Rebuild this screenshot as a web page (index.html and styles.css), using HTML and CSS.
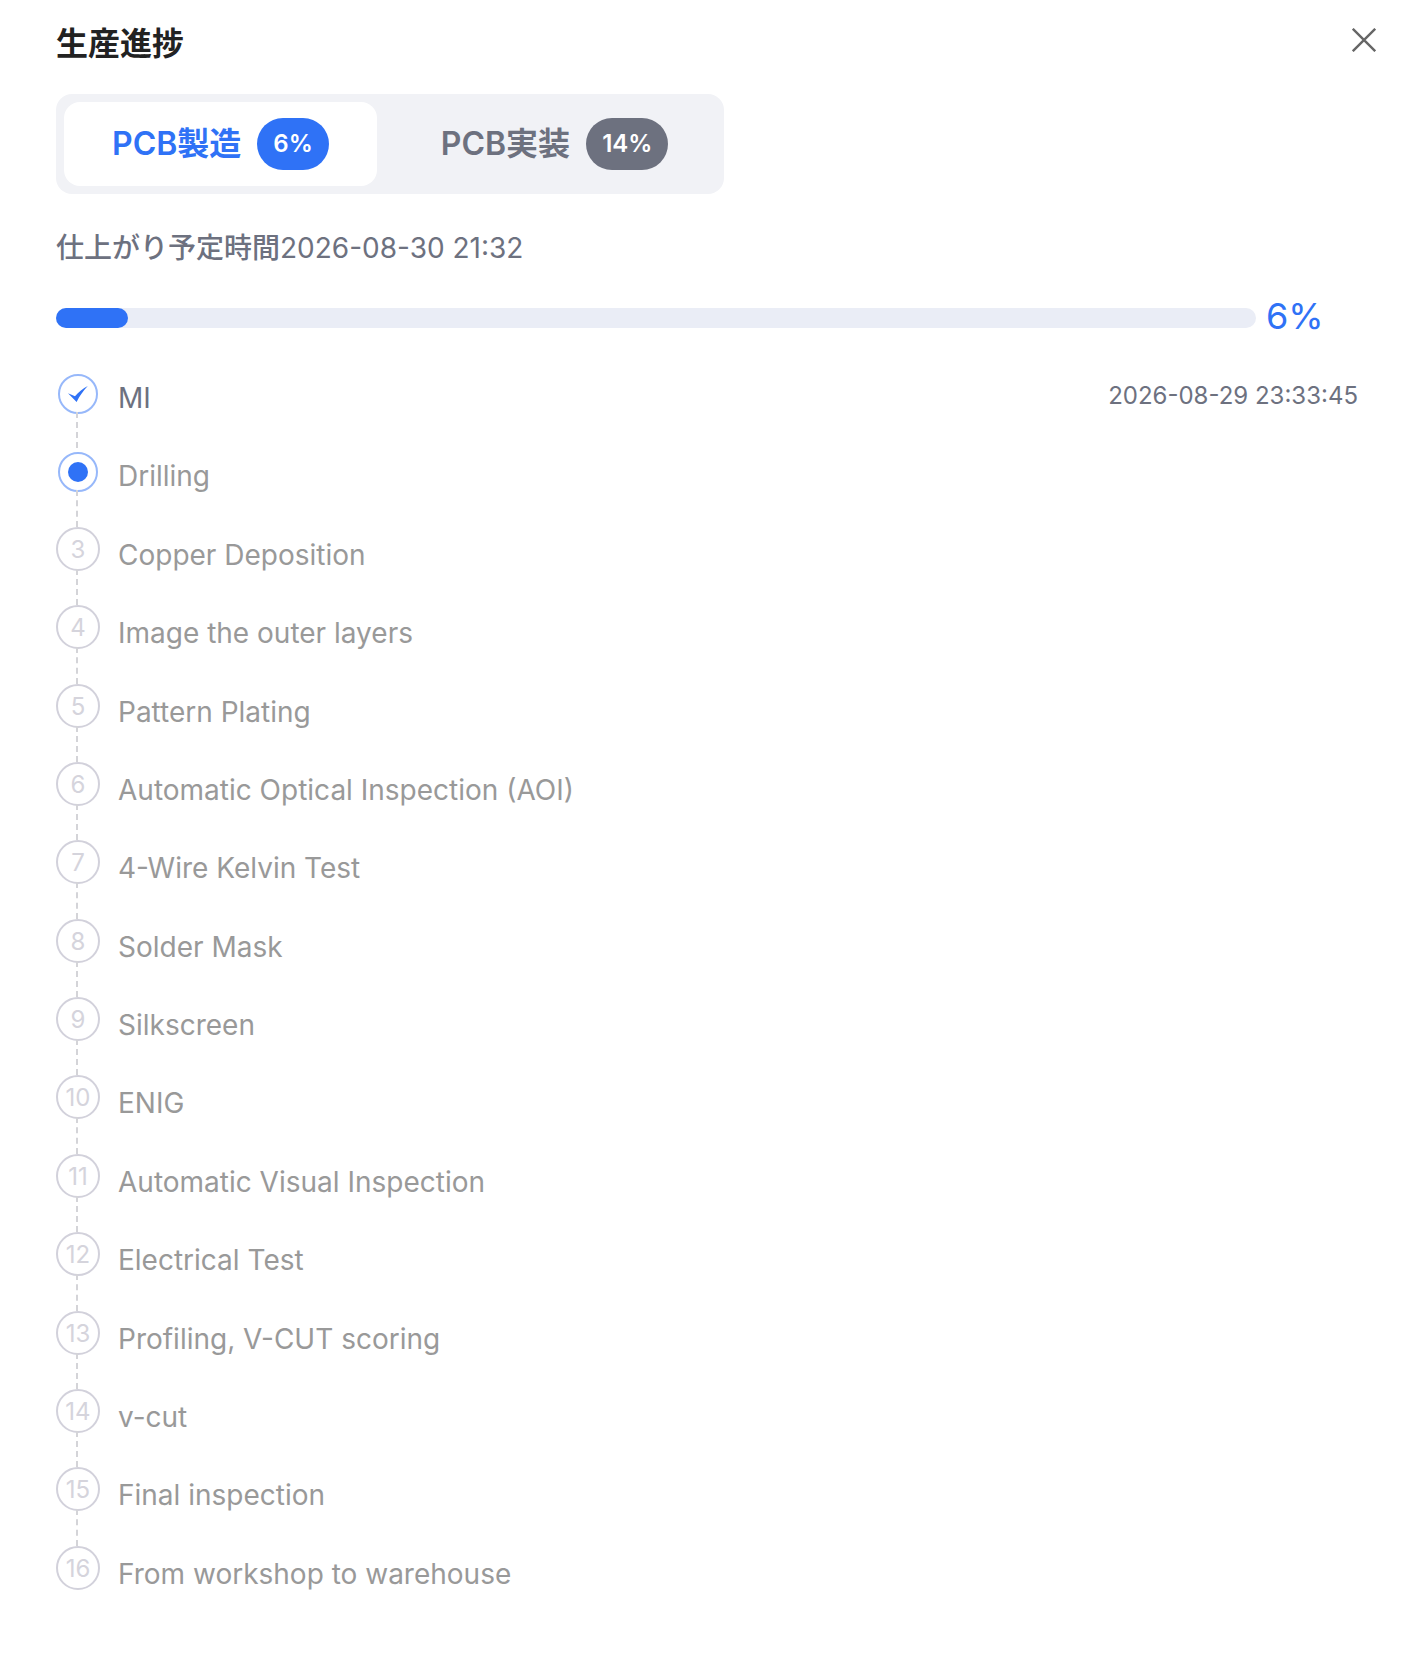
FILE: index.html
```html
<!DOCTYPE html>
<html lang="ja">
<head>
<meta charset="utf-8">
<meta name="viewport" content="width=device-width, initial-scale=1">
<title>生産進捗</title>
<link rel="stylesheet" href="styles.css">
</head>
<body>
<main class="dialog">
  <header class="dialog-header">
    <h1 class="dialog-title">生産進捗</h1>
    <button class="close" type="button" aria-label="閉じる">
      <svg width="24" height="24" viewBox="0 0 24 24" fill="none" stroke="currentColor" stroke-width="2.4" aria-hidden="true"><path d="M.8.8 23.2 23.2M23.2.8.8 23.2"/></svg>
    </button>
  </header>
  <div class="dialog-body">
    <div class="tabs" role="tablist">
      <button class="tab tab-active" type="button" role="tab" aria-selected="true">PCB製造<span class="badge">6%</span></button>
      <button class="tab" type="button" role="tab" aria-selected="false">PCB実装<span class="badge">14%</span></button>
    </div>
    <p class="estimate"><span class="estimate-label">仕上がり予定時間</span><time>2026-08-30 21:32</time></p>
    <div class="progress">
      <div class="progress-track"><div class="progress-fill" style="width: 6%"></div></div>
      <span class="progress-value">6%</span>
    </div>
    <ol class="steps">
      <li class="step step-done">
        <div class="marker"><span class="dot"><svg width="20" height="16" viewBox="0 0 20 16" fill="currentColor" aria-hidden="true"><path d="M0 7.2 7 10.2C10.500 6.200 15 2.500 19.800 0 15.500 4.500 11.500 10 8.600 16Z"/></svg></span></div>
        <span class="label">MI</span><time class="time">2026-08-29 23:33:45</time>
      </li>
      <li class="step step-current"><div class="marker"><span class="dot"></span></div><span class="label">Drilling</span></li>
      <li class="step"><div class="marker"><span class="dot">3</span></div><span class="label">Copper Deposition</span></li>
      <li class="step"><div class="marker"><span class="dot">4</span></div><span class="label">Image the outer layers</span></li>
      <li class="step"><div class="marker"><span class="dot">5</span></div><span class="label">Pattern Plating</span></li>
      <li class="step"><div class="marker"><span class="dot">6</span></div><span class="label">Automatic Optical Inspection (AOI)</span></li>
      <li class="step"><div class="marker"><span class="dot">7</span></div><span class="label">4-Wire Kelvin Test</span></li>
      <li class="step"><div class="marker"><span class="dot">8</span></div><span class="label">Solder Mask</span></li>
      <li class="step"><div class="marker"><span class="dot">9</span></div><span class="label">Silkscreen</span></li>
      <li class="step"><div class="marker"><span class="dot">10</span></div><span class="label">ENIG</span></li>
      <li class="step"><div class="marker"><span class="dot">11</span></div><span class="label">Automatic Visual Inspection</span></li>
      <li class="step"><div class="marker"><span class="dot">12</span></div><span class="label">Electrical Test</span></li>
      <li class="step"><div class="marker"><span class="dot">13</span></div><span class="label">Profiling, V-CUT scoring</span></li>
      <li class="step"><div class="marker"><span class="dot">14</span></div><span class="label">v-cut</span></li>
      <li class="step"><div class="marker"><span class="dot">15</span></div><span class="label">Final inspection</span></li>
      <li class="step"><div class="marker"><span class="dot">16</span></div><span class="label">From workshop to warehouse</span></li>
    </ol>
  </div>
</main>
</body>
</html>
```
FILE: styles.css
```css
*,
*::before,
*::after {
  box-sizing: border-box;
}

body {
  margin: 0;
  background: #fff;
  color: #6d717f;
  font-family: Inter, "Noto Sans CJK JP", sans-serif;
  font-size: 28px;
  line-height: 40px;
}

button {
  border: 0;
  background: none;
  color: inherit;
  font: inherit;
  cursor: pointer;
}

.dialog {
  display: flex;
  flex-direction: column;
  min-height: 100vh;
}

.dialog-header {
  display: flex;
  justify-content: space-between;
  align-items: flex-start;
  padding: 20px 42px 26px 56px;
}

.dialog-title {
  margin: 0;
  color: #222;
  font-size: 32px;
  font-weight: 600;
  line-height: 48px;
}

.close {
  display: flex;
  padding: 8px 0;
  color: #666;
}

.dialog-body {
  display: flex;
  flex: 1;
  flex-direction: column;
  padding: 0 60px 50px 56px;
}

.tabs {
  display: flex;
  gap: 16px;
  align-self: flex-start;
  padding: 8px;
  border-radius: 16px;
  background: #f1f2f6;
}

.tab {
  display: flex;
  align-items: center;
  gap: 16px;
  padding: 16px 48px;
  border-radius: 16px;
  font-size: 32px;
  font-weight: 600;
  white-space: nowrap;
}

.tab-active {
  background: #fff;
  color: #2f72f6;
}

.badge {
  padding: 0 16px;
  border-radius: 26px;
  background: #6d717f;
  color: #fff;
  font-size: 24px;
  font-weight: 600;
  line-height: 52px;
}

.tab-active .badge {
  background: #2f72f6;
}

.estimate {
  margin: 34px 0 28px;
}

.estimate-label {
  font-weight: 500;
}

.progress {
  display: flex;
  align-items: center;
  gap: 10px;
}

.progress-track {
  flex: 1;
  height: 20px;
  margin-top: 4px;
  border-radius: 10px;
  background: #eaedf6;
}

.progress-fill {
  height: 100%;
  border-radius: 10px;
  background: #2f72f6;
}

.progress-value {
  width: 92px;
  color: #2f72f6;
  font-size: 36px;
}

/* Rows share the height that is left in the dialog. */
.steps {
  display: grid;
  flex: 1;
  grid-auto-rows: 1fr;
  margin: 34px 0 0;
  padding: 0;
  list-style: none;
}

.step {
  display: flex;
  gap: 18px;
  min-height: 64px;
  color: #999;
}

.step-done {
  color: #6d717f;
}

.marker {
  display: flex;
  flex-direction: column;
  align-items: center;
  width: 44px;
}

.dot {
  display: flex;
  flex: none;
  align-items: center;
  justify-content: center;
  width: 44px;
  height: 44px;
  padding-top: 2px;
  border: 2px solid #d2d1db;
  border-radius: 50%;
  color: #d5d4dc;
  font-size: 24px;
}

.step-done .dot,
.step-current .dot {
  width: 40px;
  height: 40px;
  margin-top: 4px;
  padding-top: 0;
  border-color: #97b8fa;
  color: #2f72f6;
}

.step-current .dot::before {
  width: 20px;
  height: 20px;
  border-radius: 50%;
  background: currentColor;
  content: "";
}

.step:not(:last-child) .marker::after {
  flex: 1;
  width: 4px;
  margin-top: -2px;
  border-left: 2px dashed #d4d4d8;
  content: "";
}

.label {
  flex: 1;
  line-height: 56px;
}

.time {
  font-size: 24px;
  line-height: 52px;
}
```
